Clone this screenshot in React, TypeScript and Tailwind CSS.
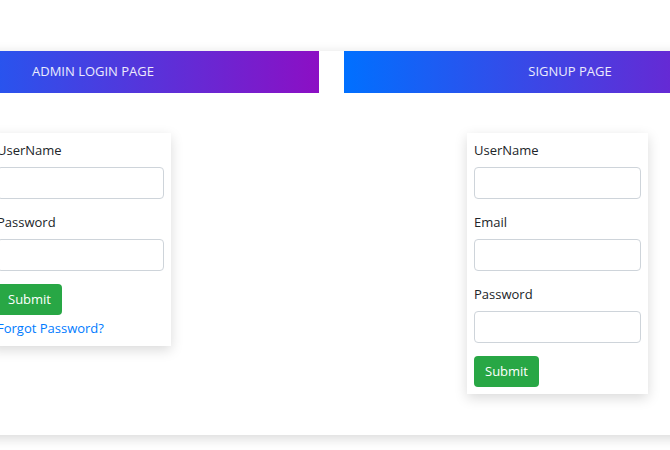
import React from "react";

const Field = ({ label, type = "text" }: { label: string; type?: string }) => (
  <div className="mb-[13px]">
    <label className="block text-[13px] leading-[21px] text-[#212529] mb-[6px]">
      {label}
    </label>
    <input
      type={type}
      className="block w-full h-[32px] rounded-[4px] border border-[#ced4da] bg-white px-3 outline-none"
    />
  </div>
);

const SubmitButton = () => (
  <button className="h-[31px] px-[11px] rounded-[4px] bg-[#28a745] text-white text-[13px] leading-[31px]">
    Submit
  </button>
);

const Header = ({ title }: { title: string }) => (
  <div className="h-[42px] flex items-center justify-center bg-[linear-gradient(to_right,#0070ff,#8c0fc4)] text-[13px] text-white/90 uppercase">
    {title}
  </div>
);

export default function App() {
  return (
    <div
      className="h-[450px] overflow-hidden bg-white pt-[51px]"
      style={{ fontFamily: '"Open Sans", "Noto Sans", sans-serif' }}
    >
      <div className="ml-[-150px] w-[980px] h-[384px] bg-white shadow-[0_3px_12px_rgba(0,0,0,0.16)]">
        <div className="flex gap-[25px] pl-[17px]">
          {/* login */}
          <div className="w-[452px] shrink-0">
            <Header title="Admin Login Page" />
            <div className="mt-[40px] ml-[123px] w-[181px] p-[7px] bg-white shadow-[0_4px_12px_rgba(0,0,0,0.15)]">
              <Field label="UserName" />
              <Field label="Password" type="password" />
              <SubmitButton />
              <div>
                <a href="#" className="text-[13px] leading-[20px] text-[#007bff]">
                  Forgot Password?
                </a>
              </div>
            </div>
          </div>
          {/* signup */}
          <div className="w-[452px] shrink-0">
            <Header title="Signup Page" />
            <div className="mt-[40px] ml-[123px] w-[181px] p-[7px] bg-white shadow-[0_4px_12px_rgba(0,0,0,0.15)]">
              <Field label="UserName" />
              <Field label="Email" type="email" />
              <Field label="Password" type="password" />
              <SubmitButton />
            </div>
          </div>
        </div>
      </div>
    </div>
  );
}
